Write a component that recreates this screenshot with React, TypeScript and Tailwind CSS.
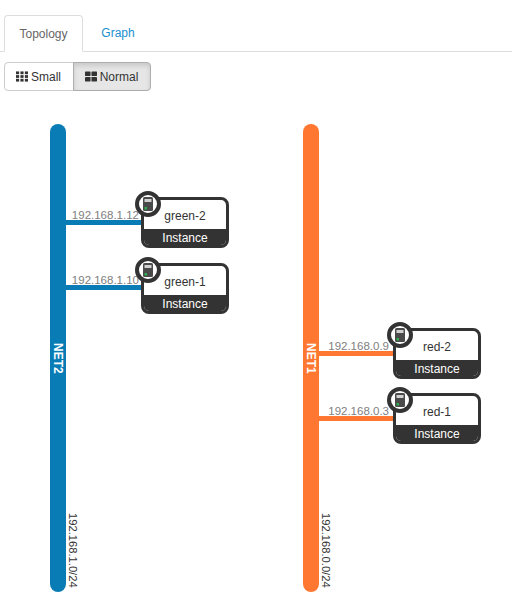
const font = "font-['Liberation_Sans',Arial,sans-serif]";

function ServerIcon() {
  return (
    <svg width="10" height="14" viewBox="0 0 10 14" className="block">
      <rect x="0" y="0" width="10" height="14" rx="1.5" fill="#4a4a4a" />
      <rect x="1.5" y="2" width="7" height="3" fill="#d0d0d0" />
      <rect x="1.5" y="10" width="2.5" height="2.5" fill="#2fae4e" />
    </svg>
  );
}

function Node({ name, x, y }: { name: string; x: number; y: number }) {
  return (
    <div className="absolute" style={{ left: x, top: y }}>
      <div className="w-[88px] h-[51px] rounded-[8px] border-[3px] border-[#333] bg-white flex flex-col overflow-hidden">
        <div className="flex-1 flex items-center justify-center text-[12px] leading-none text-[#333] pt-[3px]">{name}</div>
        <div className="h-[16px] bg-[#333] text-white text-[12px] leading-[18px] text-center">Instance</div>
      </div>
      <div className="absolute left-[-6px] top-[-6px] w-[26px] h-[26px] rounded-full border-[4px] border-[#333] bg-white flex items-center justify-center">
        <ServerIcon />
      </div>
    </div>
  );
}

function Link({ ip, y, x, color, labelClass }: { ip: string; y: number; x: number; color: string; labelClass: string }) {
  return (
    <div className="absolute" style={{ left: x, top: y }}>
      <div className={`absolute bottom-[4px] text-[11.5px] leading-none text-[#808080] whitespace-nowrap ${labelClass}`}>{ip}</div>
      <div className="w-[75px] h-[5px]" style={{ background: color }} />
    </div>
  );
}

function Net({ name, cidr, x, color }: { name: string; cidr: string; x: number; color: string }) {
  return (
    <div className="absolute top-[124px] w-[16px] h-[468px] rounded-[8px] flex items-center justify-center" style={{ left: x, background: color }}>
      <span className="[writing-mode:vertical-rl] text-white font-bold text-[12px] leading-none">{name}</span>
      <span className="absolute left-[17px] bottom-[4px] [writing-mode:vertical-rl] text-[11.2px] leading-none text-[#333] whitespace-nowrap">{cidr}</span>
    </div>
  );
}

export default function App() {
  return (
    <div className={`${font} relative w-[512px] h-[600px] bg-white overflow-hidden`}>
      <div className="pt-[15px] border-b border-[#ddd] flex pl-[4px]">
        <div className="h-[37px] w-[79px] -mb-px border border-[#ddd] border-b-white rounded-t-[4px] bg-white text-[#666] text-[12px] flex items-center justify-center">Topology</div>
        <div className="h-[36px] w-[70px] text-[#1a8fce] text-[12px] flex items-center justify-center">Graph</div>
      </div>
      <div className="mt-[10px] ml-[4px] flex w-fit text-[12px] text-[#333]">
        <div className="h-[29px] w-[70px] border border-[#ccc] rounded-l-[4px] flex items-center justify-center gap-[3px] pr-[1px]">
          <svg width="12" height="11" viewBox="0 0 13 11" fill="#333"><rect x="0" y="0" width="3.4" height="3" /><rect x="4.8" y="0" width="3.4" height="3" /><rect x="9.6" y="0" width="3.4" height="3" /><rect x="0" y="4" width="3.4" height="3" /><rect x="4.8" y="4" width="3.4" height="3" /><rect x="9.6" y="4" width="3.4" height="3" /><rect x="0" y="8" width="3.4" height="3" /><rect x="4.8" y="8" width="3.4" height="3" /><rect x="9.6" y="8" width="3.4" height="3" /></svg>
          <span>Small</span>
        </div>
        <div className="h-[29px] w-[78px] -ml-px border border-[#adadad] rounded-r-[4px] bg-[#e6e6e6] shadow-[inset_0_3px_5px_rgba(0,0,0,0.125)] flex items-center justify-center gap-[3px] pr-[1px]">
          <svg width="12" height="11" viewBox="0 0 13 11" fill="#333"><rect x="0" y="0" width="6" height="5" rx="0.5" /><rect x="7" y="0" width="6" height="5" rx="0.5" /><rect x="0" y="6" width="6" height="5" rx="0.5" /><rect x="7" y="6" width="6" height="5" rx="0.5" /></svg>
          <span>Normal</span>
        </div>
      </div>

      <Net name="NET2" cidr="192.168.1.0/24" x={50} color="#0a7cb5" />
      <Net name="NET1" cidr="192.168.0.0/24" x={303} color="#ff7730" />

      <Link ip="192.168.1.12" x={66} y={220} color="#0a7cb5" labelClass="right-[2px]" />
      <Link ip="192.168.1.10" x={66} y={285} color="#0a7cb5" labelClass="right-[2px]" />
      <Link ip="192.168.0.9" x={319} y={351} color="#ff7730" labelClass="right-[5px]" />
      <Link ip="192.168.0.3" x={319} y={416} color="#ff7730" labelClass="right-[5px]" />

      <Node name="green-2" x={141} y={197} />
      <Node name="green-1" x={141} y={263} />
      <Node name="red-2" x={393} y={328} />
      <Node name="red-1" x={393} y={393} />
    </div>
  );
}
